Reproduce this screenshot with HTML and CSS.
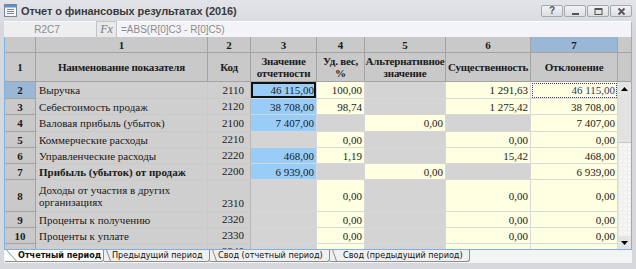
FILE: index.html
```html
<!DOCTYPE html>
<html lang="ru">
<head>
<meta charset="utf-8">
<title>Отчет о финансовых результатах (2016)</title>
<link rel="stylesheet" href="styles.css">
</head>
<body>
<div class="window">
  <div class="titlebar">
    <svg class="appicon" width="13" height="13" viewBox="0 0 13 13">
      <rect x="0.5" y="0.5" width="12" height="12" fill="#f4f6fa" stroke="#7a8796"/>
      <rect x="1" y="1" width="11" height="2.5" fill="#5b8fd0"/>
      <rect x="3" y="5" width="7" height="1" fill="#7a8796"/>
      <rect x="3" y="7" width="7" height="1" fill="#7a8796"/>
      <rect x="3" y="9" width="7" height="1" fill="#7a8796"/>
    </svg>
    <span class="title">Отчет о финансовых результатах (2016)</span>
    <div class="tbtns">
      <span class="tbtn">?</span>
      <span class="tbtn"><svg width="9" height="9" viewBox="0 0 9 9"><rect x="1" y="6" width="7" height="2" fill="#555"/></svg></span>
      <span class="tbtn"><svg width="9" height="9" viewBox="0 0 9 9"><rect x="1" y="1.5" width="7" height="6" fill="none" stroke="#555" stroke-width="1"/><rect x="1" y="1" width="7" height="2" fill="#555"/></svg></span>
      <span class="tbtn"><svg width="9" height="9" viewBox="0 0 9 9"><path d="M1.5 1.5 L7.5 7.5 M7.5 1.5 L1.5 7.5" stroke="#555" stroke-width="1.8"/></svg></span>
    </div>
  </div>
  <div class="formula">
    <div class="cellref">R2C7</div>
    <div class="fx">Fx</div>
    <div class="finput">=ABS(R[0]C3 - R[0]C5)</div>
  </div>
  <div class="gridwrap">
    <div class="sheet">
      <div class="c hd corner"></div>
      <div class="c hd">1</div>
      <div class="c hd">2</div>
      <div class="c hd">3</div>
      <div class="c hd">4</div>
      <div class="c hd">5</div>
      <div class="c hd">6</div>
      <div class="c hd sel">7</div>

      <div class="c hd">1</div>
      <div class="c hd">Наименование показателя</div>
      <div class="c hd">Код</div>
      <div class="c hd">Значение отчетности</div>
      <div class="c hd">Уд. вес, %</div>
      <div class="c hd">Альтернативное значение</div>
      <div class="c hd">Существенность</div>
      <div class="c hd">Отклонение</div>

      <div class="c rh sel">2</div>
      <div class="c nm">Выручка</div>
      <div class="c cd">2110</div>
      <div class="c v bl cur">46 115,00</div>
      <div class="c v ye">100,00</div>
      <div class="c v gr"></div>
      <div class="c v ye">1 291,63</div>
      <div class="c v ye focus">46 115,00</div>

      <div class="c rh">3</div>
      <div class="c nm">Себестоимость продаж</div>
      <div class="c cd">2120</div>
      <div class="c v bl">38 708,00</div>
      <div class="c v ye">98,74</div>
      <div class="c v gr"></div>
      <div class="c v ye">1 275,42</div>
      <div class="c v ye">38 708,00</div>

      <div class="c rh">4</div>
      <div class="c nm">Валовая прибыль (убыток)</div>
      <div class="c cd">2100</div>
      <div class="c v bl">7 407,00</div>
      <div class="c v gr"></div>
      <div class="c v ye">0,00</div>
      <div class="c v gr"></div>
      <div class="c v ye">7 407,00</div>

      <div class="c rh">5</div>
      <div class="c nm">Коммерческие расходы</div>
      <div class="c cd">2210</div>
      <div class="c v gr"></div>
      <div class="c v ye">0,00</div>
      <div class="c v gr"></div>
      <div class="c v ye">0,00</div>
      <div class="c v ye">0,00</div>

      <div class="c rh">6</div>
      <div class="c nm">Управленческие расходы</div>
      <div class="c cd">2220</div>
      <div class="c v bl">468,00</div>
      <div class="c v ye">1,19</div>
      <div class="c v gr"></div>
      <div class="c v ye">15,42</div>
      <div class="c v ye">468,00</div>

      <div class="c rh">7</div>
      <div class="c nm b">Прибыль (убыток) от продаж</div>
      <div class="c cd">2200</div>
      <div class="c v bl">6 939,00</div>
      <div class="c v gr"></div>
      <div class="c v ye">0,00</div>
      <div class="c v gr"></div>
      <div class="c v ye">6 939,00</div>

      <div class="c rh">8</div>
      <div class="c nm">Доходы от участия в других организациях</div>
      <div class="c cd">2310</div>
      <div class="c v gr"></div>
      <div class="c v ye">0,00</div>
      <div class="c v gr"></div>
      <div class="c v ye">0,00</div>
      <div class="c v ye">0,00</div>

      <div class="c rh">9</div>
      <div class="c nm">Проценты к получению</div>
      <div class="c cd">2320</div>
      <div class="c v gr"></div>
      <div class="c v ye">0,00</div>
      <div class="c v gr"></div>
      <div class="c v ye">0,00</div>
      <div class="c v ye">0,00</div>

      <div class="c rh">10</div>
      <div class="c nm">Проценты к уплате</div>
      <div class="c cd">2330</div>
      <div class="c v gr"></div>
      <div class="c v ye">0,00</div>
      <div class="c v gr"></div>
      <div class="c v ye">0,00</div>
      <div class="c v ye">0,00</div>

      <div class="c rh">11</div>
      <div class="c nm">Прочие доходы</div>
      <div class="c cd">2340</div>
      <div class="c v gr"></div>
      <div class="c v ye">0,00</div>
      <div class="c v gr"></div>
      <div class="c v ye">0,00</div>
      <div class="c v ye">0,00</div>
    </div>
    <div class="vscroll">
      <div class="vs-h1"></div>
      <div class="vs-h2"></div>
      <div class="vs-btn"><svg width="7" height="4" viewBox="0 0 7 4"><path d="M0 4 L3.5 0 L7 4 Z" fill="#000"/></svg></div>
      <div class="vs-thumb"></div>
      <div class="vs-track"></div>
      <div class="vs-btn"><svg width="7" height="4" viewBox="0 0 7 4"><path d="M0 0 L7 0 L3.5 4 Z" fill="#000"/></svg></div>
    </div>
  </div>
  <div class="tabs">
    <div class="tab active">Отчетный период</div>
    <div class="tab t2">Предыдущий период</div>
    <div class="tab t3">Свод (отчетный период)</div>
    <div class="tab t4">Свод (предыдущий период)</div>
  </div>
</div>
</body>
</html>
```

FILE: styles.css
```css
* { box-sizing: border-box; }
html, body { margin: 0; padding: 0; }
body {
  width: 636px;
  height: 269px;
  overflow: hidden;
  background: #d6d8de;
}
.window {
  width: 636px;
  height: 269px;
  background: linear-gradient(#e3e4e9, #d6d8de 30px, #d6d8de);
  display: flex;
  flex-direction: column;
}
.titlebar {
  height: 21px;
  display: flex;
  align-items: center;
  padding-left: 4px;
}
.appicon { display: block; flex: none; }
.title {
  margin-left: 4px;
  font-family: "Liberation Sans", Arial, sans-serif;
  font-size: 11px;
  font-weight: bold;
  color: #3a3a3a;
  letter-spacing: -0.1px;
}
.tbtns {
  margin-left: auto;
  margin-right: 4px;
  display: flex;
  gap: 1px;
  align-self: flex-start;
  margin-top: 5px;
}
.tbtn {
  width: 22px;
  height: 12px;
  border: 1px solid #a4a8b0;
  border-radius: 2px;
  background: linear-gradient(#f2f3f5, #dcdee3);
  display: flex;
  align-items: center;
  justify-content: center;
  font-family: "Liberation Sans", Arial, sans-serif;
  font-size: 10px;
  font-weight: bold;
  color: #555;
  line-height: 1;
}
.formula {
  height: 16px;
  margin: 0 4px;
  display: flex;
  font-family: "Liberation Sans", Arial, sans-serif;
  font-size: 10px;
  color: #8a8a8a;
}
.cellref {
  width: 92px;
  background: #eeeef0;
  border-top: 1px solid #f8f8f8;
  display: flex;
  align-items: center;
  justify-content: center;
  padding-right: 6px;
}
.fx {
  width: 21px;
  background: #e9e9eb;
  border: 1px solid #c4c4c8;
  border-bottom: none;
  font-family: "Liberation Serif", "Times New Roman", serif;
  font-style: italic;
  font-size: 12px;
  color: #777;
  display: flex;
  align-items: center;
  justify-content: center;
}
.finput {
  flex: 1;
  background: #f4f4f8;
  border-top: 1px solid #fdfdfd;
  border-right: 1px solid #8ebde9;
  display: flex;
  align-items: center;
  padding-left: 4px;
}
.gridwrap {
  margin-left: 4px;
  width: 628px;
  height: 213px;
  border: 1px solid #7fb0e2;
  border-top: none;
  display: flex;
  overflow: hidden;
}
.sheet {
  width: 613px;
  height: 212px;
  overflow: hidden;
  display: grid;
  grid-template-columns: 31px 172px 43px 66px 48px 81px 85px 87px;
  grid-template-rows: 16px 29px 17px 16px 17px 16px 16px 16px 32px 16px 16px 16px;
  font-family: "Liberation Serif", "Times New Roman", serif;
  font-size: 11px;
  color: #1a1a1a;
}
.c {
  border-right: 1px solid #d8d8d8;
  border-bottom: 1px solid #d8d8d8;
  display: flex;
  align-items: center;
  overflow: hidden;
  line-height: 12px;
}
.hd, .rh {
  background: #c9c9c9;
  border-color: #a3a3a3;
  font-weight: bold;
  justify-content: center;
  text-align: center;
  padding: 0 1px;
}
.hd { letter-spacing: -0.2px; }
.sel { background: #9bb7d6; }
.nm, .cd {
  background: #cfcfcf;
  border-color: #cacaca;
}
.nm { padding-left: 3px; }
.cd {
  justify-content: flex-end;
  align-items: flex-end;
  padding: 0 6px 2px 0;
  border-right-color: #b8b8b8;
}
.b { font-weight: bold; }
.v {
  justify-content: flex-end;
  padding-right: 2px;
}
.ye { background: #ffffe1; }
.gr { background: #d4d4d4; }
.bl { background: #99cdf7; border-color: #d0d8e0; }
.cur { box-shadow: inset 0 0 0 2px #111; }
.focus {
  outline: 1px dotted #404060;
  outline-offset: -2px;
  color: #33337a;
}
.vscroll {
  width: 13px;
  display: flex;
  flex-direction: column;
}
.vs-h1 { height: 16px; background: #c9c9c9; border-bottom: 1px solid #a3a3a3; }
.vs-h2 { height: 29px; background: #c9c9c9; border-bottom: 1px solid #a3a3a3; }
.vs-btn {
  height: 13px;
  background: #e4e4e4;
  display: flex;
  align-items: center;
  justify-content: center;
}
.vs-thumb {
  height: 48px;
  background: #e2e2e2;
  border-bottom: 1px solid #c8c8c8;
}
.vs-track {
  flex: 1;
  background-color: #f0f0f0;
  background-image: radial-gradient(circle, #ffffff 0.6px, transparent 0.8px);
  background-size: 4px 4px;
  border-left: 1px solid #e8e8e8;
}
.tabs {
  margin-left: 4px;
  width: 628px;
  height: 13px;
  background: #f4f4f4;
  display: flex;
  padding-left: 1px;
  font-family: "DejaVu Sans Condensed", "DejaVu Sans", sans-serif;
  font-size: 9px;
  color: #111;
}
.tab {
  position: relative;
  height: 12px;
  line-height: 11px;
  white-space: nowrap;
  border-right: 1px solid #8c8c8c;
  border-bottom: 1px solid #8c8c8c;
  border-bottom-right-radius: 3px;
  background: #f0f0f0;
}
.tab::before {
  content: "";
  position: absolute;
  top: 0;
  width: 12px;
  height: 12px;
  border-right: 1px solid #8c8c8c;
  transform: skewX(42deg);
  transform-origin: top right;
}
.active {
  width: 99px;
  padding-left: 13px;
  font-weight: bold;
  background: #ffffff;
}
.active::before { left: -11px; }
.t2 { width: 106px; padding-left: 8px; }
.t3 { width: 120px; padding-left: 8px; }
.t4 { width: 140px; padding-left: 13px; }
.t2::before, .t3::before, .t4::before {
  width: 4px;
  left: -2px;
  transform: skewX(20deg);
}
```
